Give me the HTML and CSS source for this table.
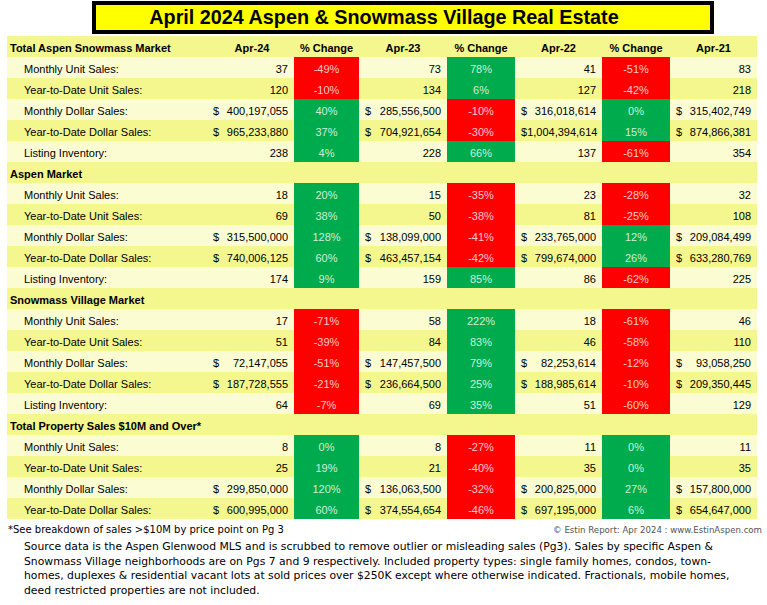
FILE: index.html
```html
<!DOCTYPE html>
<html>
<head>
<meta charset="utf-8">
<title>April 2024 Aspen &amp; Snowmass Village Real Estate</title>
<link rel="stylesheet" href="styles.css">
</head>
<body>
<div class="page">
  <div class="title">April 2024 Aspen &amp; Snowmass Village Real Estate</div>
  <table class="grid">
    <colgroup>
      <col class="c-lbl"><col class="c-v24"><col class="c-p1"><col class="c-v23"><col class="c-p2"><col class="c-v22"><col class="c-p3"><col class="c-v21">
    </colgroup>
    <tr class="hdr">
      <th class="sec">Total Aspen Snowmass Market</th><th>Apr-24</th><th>% Change</th><th>Apr-23</th><th>% Change</th><th>Apr-22</th><th>% Change</th><th>Apr-21</th>
    </tr>
    <tr class="pale"><td class="lbl">Monthly Unit Sales:</td><td class="num">37</td><td class="neg">-49%</td><td class="num">73</td><td class="pos">78%</td><td class="num">41</td><td class="neg">-51%</td><td class="num">83</td></tr>
    <tr class="yel"><td class="lbl">Year-to-Date Unit Sales:</td><td class="num">120</td><td class="neg">-10%</td><td class="num">134</td><td class="pos">6%</td><td class="num">127</td><td class="neg">-42%</td><td class="num">218</td></tr>
    <tr class="pale"><td class="lbl">Monthly Dollar Sales:</td><td class="num"><div class="usd"><span>$</span><span>400,197,055</span></div></td><td class="pos">40%</td><td class="num"><div class="usd"><span>$</span><span>285,556,500</span></div></td><td class="neg">-10%</td><td class="num"><div class="usd"><span>$</span><span>316,018,614</span></div></td><td class="pos">0%</td><td class="num"><div class="usd"><span>$</span><span>315,402,749</span></div></td></tr>
    <tr class="yel"><td class="lbl">Year-to-Date Dollar Sales:</td><td class="num"><div class="usd"><span>$</span><span>965,233,880</span></div></td><td class="pos">37%</td><td class="num"><div class="usd"><span>$</span><span>704,921,654</span></div></td><td class="neg">-30%</td><td class="num"><div class="usd"><span>$</span><span>1,004,394,614</span></div></td><td class="pos">15%</td><td class="num"><div class="usd"><span>$</span><span>874,866,381</span></div></td></tr>
    <tr class="pale"><td class="lbl">Listing Inventory:</td><td class="num">238</td><td class="pos">4%</td><td class="num">228</td><td class="pos">66%</td><td class="num">137</td><td class="neg">-61%</td><td class="num">354</td></tr>

    <tr class="yel"><td class="sec" colspan="8">Aspen Market</td></tr>
    <tr class="pale"><td class="lbl">Monthly Unit Sales:</td><td class="num">18</td><td class="pos">20%</td><td class="num">15</td><td class="neg">-35%</td><td class="num">23</td><td class="neg">-28%</td><td class="num">32</td></tr>
    <tr class="yel"><td class="lbl">Year-to-Date Unit Sales:</td><td class="num">69</td><td class="pos">38%</td><td class="num">50</td><td class="neg">-38%</td><td class="num">81</td><td class="neg">-25%</td><td class="num">108</td></tr>
    <tr class="pale"><td class="lbl">Monthly Dollar Sales:</td><td class="num"><div class="usd"><span>$</span><span>315,500,000</span></div></td><td class="pos">128%</td><td class="num"><div class="usd"><span>$</span><span>138,099,000</span></div></td><td class="neg">-41%</td><td class="num"><div class="usd"><span>$</span><span>233,765,000</span></div></td><td class="pos">12%</td><td class="num"><div class="usd"><span>$</span><span>209,084,499</span></div></td></tr>
    <tr class="yel"><td class="lbl">Year-to-Date Dollar Sales:</td><td class="num"><div class="usd"><span>$</span><span>740,006,125</span></div></td><td class="pos">60%</td><td class="num"><div class="usd"><span>$</span><span>463,457,154</span></div></td><td class="neg">-42%</td><td class="num"><div class="usd"><span>$</span><span>799,674,000</span></div></td><td class="pos">26%</td><td class="num"><div class="usd"><span>$</span><span>633,280,769</span></div></td></tr>
    <tr class="pale"><td class="lbl">Listing Inventory:</td><td class="num">174</td><td class="pos">9%</td><td class="num">159</td><td class="pos">85%</td><td class="num">86</td><td class="neg">-62%</td><td class="num">225</td></tr>

    <tr class="yel"><td class="sec" colspan="8">Snowmass Village Market</td></tr>
    <tr class="pale"><td class="lbl">Monthly Unit Sales:</td><td class="num">17</td><td class="neg">-71%</td><td class="num">58</td><td class="pos">222%</td><td class="num">18</td><td class="neg">-61%</td><td class="num">46</td></tr>
    <tr class="yel"><td class="lbl">Year-to-Date Unit Sales:</td><td class="num">51</td><td class="neg">-39%</td><td class="num">84</td><td class="pos">83%</td><td class="num">46</td><td class="neg">-58%</td><td class="num">110</td></tr>
    <tr class="pale"><td class="lbl">Monthly Dollar Sales:</td><td class="num"><div class="usd"><span>$</span><span>72,147,055</span></div></td><td class="neg">-51%</td><td class="num"><div class="usd"><span>$</span><span>147,457,500</span></div></td><td class="pos">79%</td><td class="num"><div class="usd"><span>$</span><span>82,253,614</span></div></td><td class="neg">-12%</td><td class="num"><div class="usd"><span>$</span><span>93,058,250</span></div></td></tr>
    <tr class="yel"><td class="lbl">Year-to-Date Dollar Sales:</td><td class="num"><div class="usd"><span>$</span><span>187,728,555</span></div></td><td class="neg">-21%</td><td class="num"><div class="usd"><span>$</span><span>236,664,500</span></div></td><td class="pos">25%</td><td class="num"><div class="usd"><span>$</span><span>188,985,614</span></div></td><td class="neg">-10%</td><td class="num"><div class="usd"><span>$</span><span>209,350,445</span></div></td></tr>
    <tr class="pale"><td class="lbl">Listing Inventory:</td><td class="num">64</td><td class="neg">-7%</td><td class="num">69</td><td class="pos">35%</td><td class="num">51</td><td class="neg">-60%</td><td class="num">129</td></tr>

    <tr class="yel"><td class="sec" colspan="8">Total Property Sales $10M and Over*</td></tr>
    <tr class="pale"><td class="lbl">Monthly Unit Sales:</td><td class="num">8</td><td class="pos">0%</td><td class="num">8</td><td class="neg">-27%</td><td class="num">11</td><td class="pos">0%</td><td class="num">11</td></tr>
    <tr class="yel"><td class="lbl">Year-to-Date Unit Sales:</td><td class="num">25</td><td class="pos">19%</td><td class="num">21</td><td class="neg">-40%</td><td class="num">35</td><td class="pos">0%</td><td class="num">35</td></tr>
    <tr class="pale"><td class="lbl">Monthly Dollar Sales:</td><td class="num"><div class="usd"><span>$</span><span>299,850,000</span></div></td><td class="pos">120%</td><td class="num"><div class="usd"><span>$</span><span>136,063,500</span></div></td><td class="neg">-32%</td><td class="num"><div class="usd"><span>$</span><span>200,825,000</span></div></td><td class="pos">27%</td><td class="num"><div class="usd"><span>$</span><span>157,800,000</span></div></td></tr>
    <tr class="yel"><td class="lbl">Year-to-Date Dollar Sales:</td><td class="num"><div class="usd"><span>$</span><span>600,995,000</span></div></td><td class="pos">60%</td><td class="num"><div class="usd"><span>$</span><span>374,554,654</span></div></td><td class="neg">-46%</td><td class="num"><div class="usd"><span>$</span><span>697,195,000</span></div></td><td class="pos">6%</td><td class="num"><div class="usd"><span>$</span><span>654,647,000</span></div></td></tr>
  </table>
  <div class="notes">
    <span class="foot">*See breakdown of sales &gt;$10M by price point on Pg 3</span>
    <span class="copy">© Estin Report: Apr 2024 : www.EstinAspen.com</span>
  </div>
  <div class="source">
    <span class="line">Source data is the Aspen Glenwood MLS and is scrubbed to remove outlier or misleading sales (Pg3). Sales by specific Aspen &amp;</span>
    <span class="line">Snowmass Village neighborhoods are on Pgs 7 and 9 respectively. Included property types: single family homes, condos, town-</span>
    <span class="line">homes, duplexes &amp; residential vacant lots at sold prices over $250K except where otherwise indicated. Fractionals, mobile homes,</span>
    <span class="line">deed restricted properties are not included.</span>
  </div>
</div>
</body>
</html>
```
FILE: styles.css
```css
html, body {
  margin: 0;
  padding: 0;
  background: #ffffff;
}

.page {
  width: 767px;
  height: 605px;
  overflow: hidden;
  font-family: "Liberation Sans", Arial, sans-serif;
  color: #000;
}

.title {
  margin: 1px 0 0 92px;
  width: 576px;
  padding-right: 38px;
  height: 25px;
  border: 4px solid #000;
  background: #ffff00;
  font-weight: bold;
  font-size: 19.8px;
  line-height: 25px;
  text-align: center;
  white-space: nowrap;
}

.grid {
  margin: 2px 0 0 7px;
  width: 750px;
  table-layout: fixed;
  border-collapse: collapse;
  border-spacing: 0;
  font-size: 11px;
}

.c-lbl { width: 203px; }
.c-v24 { width: 84px; }
.c-p1 { width: 65px; }
.c-v23 { width: 88px; }
.c-p2 { width: 68px; }
.c-v22 { width: 87px; }
.c-p3 { width: 68px; }
.c-v21 { width: 87px; }

.grid tr {
  height: 21px;
}

.grid th,
.grid td {
  padding: 3px 0 0 0;
  height: 18px;
  line-height: 18px;
  white-space: nowrap;
  overflow: hidden;
  vertical-align: middle;
}

.hdr {
  background: #f4f78e;
}

.hdr th {
  font-weight: bold;
  text-align: center;
}

.yel {
  background: #f4f78e;
}

.pale {
  background: #fbfcd2;
}

.grid .sec {
  font-weight: bold;
  text-align: left;
  padding-left: 3px;
}

.lbl {
  padding-left: 17px !important;
}

.num {
  text-align: right;
  padding-right: 6px !important;
  padding-left: 6px !important;
}

.usd {
  display: flex;
  justify-content: space-between;
}

.grid tr td:nth-child(2) .usd {
  margin-left: -3px;
}

.pos,
.neg {
  text-align: center;
}

.pos {
  background: #00ab4e;
  color: #cfeed6;
}

.neg {
  background: #fd0000;
  color: #ffcaca;
}

.notes {
  display: flex;
  justify-content: space-between;
  align-items: baseline;
  margin: 5px 5px 0 8px;
  font-family: "DejaVu Sans", Verdana, sans-serif;
}

.foot {
  font-size: 10px;
}

.copy {
  font-size: 8.6px;
  color: #555;
}

.source {
  margin: 5px 0 0 24px;
  font-family: "DejaVu Sans", Verdana, sans-serif;
  font-size: 10.8px;
  line-height: 14.7px;
}

.line {
  display: block;
  white-space: nowrap;
}
```
